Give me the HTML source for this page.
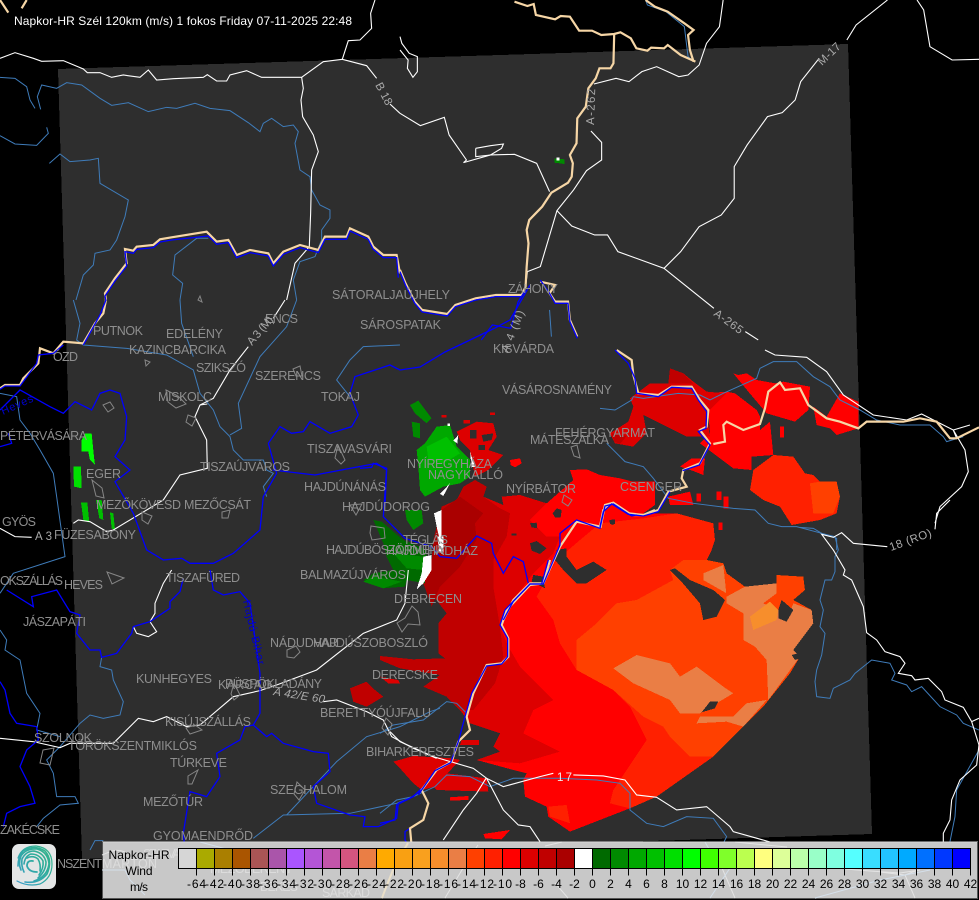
<!DOCTYPE html>
<html>
<head>
<meta charset="utf-8">
<style>
html,body{margin:0;padding:0;background:#000;width:979px;height:900px;overflow:hidden}
svg{display:block;position:absolute;left:0;top:0}
polyline,polygon,path{vector-effect:non-scaling-stroke}
.w polyline{fill:none;stroke:#fff;stroke-width:1.1}
.r polyline{fill:none;stroke:#3f7cba;stroke-width:1}
.b polyline{fill:none;stroke:#0000ff;stroke-width:1.3}
.p polyline{fill:none;stroke:#f6d6a6;stroke-width:2.2}
.o polygon,.o polyline{fill:none;stroke:#868686;stroke-width:1}
.x polygon,.x rect{shape-rendering:crispEdges}
text{font-family:"Liberation Sans",sans-serif}
.c text{fill:#8e8e8e;font-size:12.5px}
.l text{fill:#aaa;font-size:11.5px}
.u text{fill:#dcdcdc;font-size:12.5px}
.t text{fill:#000;font-size:12px;text-anchor:middle}
</style>
</head>
<body>
<svg width="979" height="900" viewBox="0 0 979 900" xmlns="http://www.w3.org/2000/svg">
<defs>
<linearGradient id="lg" gradientUnits="userSpaceOnUse" x1="14" y1="880" x2="52" y2="850">
<stop offset="0" stop-color="#3a9cc8"/><stop offset=".55" stop-color="#2eaaa0"/><stop offset="1" stop-color="#33b488"/>
</linearGradient>
</defs>
<rect width="979" height="900" fill="#000"/>
<polygon points="58,69 848,44 872,834 82,859" fill="#2e2e2e" shape-rendering="crispEdges"/>

<!-- radar main body -->
<g class="x">
<g transform="translate(380,560) scale(.3333)">
<polygon fill="#ff0000" points="130,70 155,0 160,-60 185,-160 230,-180 250,-220 285,-240 320,-220 310,-190 370,-165 365,-190 420,-195 500,-170 580,-240 570,-270 620,-272 660,-255 720,-245 760,-235 825,-235 825,-165 790,-140 890,-140 1000,-110 1005,-60 995,-30 980,0 1030,10 1040,40 1095,80 1190,70 1190,45 1270,50 1275,90 1240,120 1295,150 1300,190 1240,270 1260,290 1230,340 1150,440 1090,500 1000,590 830,710 750,745 570,815 505,770 500,740 435,710 430,660 440,640 400,630 290,600 360,575 340,560 360,520 270,490 240,450 200,410 130,380 180,345 60,325 0,300 0,288 100,298 195,295 175,280 175,190 200,160"/>
<polygon fill="#ff2000" points="530,0 600,-60 660,-110 790,-125 890,-140 1000,-110 1005,-60 995,-30 980,0 1030,10 1040,40 1095,80 1190,70 1190,45 1270,50 1275,90 1240,120 1295,150 1300,190 1240,270 1260,290 1230,340 1150,440 1090,500 1000,590 830,710 750,745 690,730 700,690 800,540 790,520 750,440 700,390 590,330 540,250 520,180 470,110"/>
<polygon fill="#ff4000" points="590,240 650,190 710,130 770,120 880,60 870,30 910,0 980,0 1030,10 1040,40 1095,80 1190,70 1190,45 1270,50 1275,90 1240,120 1295,150 1300,190 1240,270 1260,290 1230,340 1150,440 1090,500 1000,590 930,590 870,530 850,500 790,470 700,390 590,330"/>
<polygon fill="#ea7e45" points="700,325 770,285 870,310 900,350 950,320 1030,380 1060,400 1010,430 960,460 900,460 870,420 760,370"/>
<polygon fill="#ea7e45" points="1060,470 1100,430 1160,420 1090,500 1040,485 950,490 960,470"/>
<polygon fill="#ea7e45" points="970,40 1030,15 1040,110 1095,80 1190,70 1190,100 1150,130 1195,150 1220,185 1240,130 1295,150 1300,190 1240,270 1260,290 1165,420 1160,300 1125,260 1090,240 1090,160 1040,130 1040,100 970,60"/>
<polygon fill="#f78e2c" points="1110,170 1170,125 1195,150 1190,180 1120,210"/>
<polygon fill="#dd0000" points="130,70 155,0 160,-60 185,-160 230,-180 250,-220 285,-240 320,-220 310,-190 370,-165 365,-190 420,-195 500,-170 450,-120 500,-70 540,-70 520,-20 460,40 445,60 390,130 360,200 385,260 420,320 520,420 460,450 430,520 540,575 420,610 290,600 360,575 340,560 360,520 270,490 240,450 200,410 130,380 180,345 60,325 0,300 0,288 100,298 195,295 175,280 175,190 200,160"/>
<polygon fill="#c00000" points="130,70 155,0 160,-60 185,-160 230,-180 250,-220 285,-240 320,-220 310,-190 360,-155 390,-140 380,-70 340,0 340,80 360,200 370,290 345,370 280,450 240,450 200,410 130,380 180,345 60,325 0,300 0,288 100,298 195,295 175,280 175,190 200,160"/>
<polygon fill="#aa0000" points="130,70 155,0 160,-60 185,-150 240,-190 310,-140 285,-110 290,-60 240,20 180,80 155,140"/>
<polygon fill="#2e2e2e" points="965,457 990,425 1015,425 1005,445"/>
<polygon fill="#2e2e2e" points="870,30 885,25 930,60 1000,90 1035,120 1010,170 970,180 960,130 900,60"/>
<polygon fill="#2e2e2e" points="1195,150 1205,120 1240,150 1220,185 1195,175"/>
<polygon fill="#2e2e2e" points="1235,285 1255,280 1262,295 1245,300"/>
<polygon fill="#dd0000" points="40,605 100,588 215,595 240,600 165,680 125,690 100,670 60,625"/>
<polygon fill="#dd0000" points="160,680 200,640 320,655 325,695 170,690"/>
<polygon fill="#dd0000" points="245,540 297,540 297,555 240,555"/>
<polygon fill="#ff0000" points="210,712 265,708 265,720 210,722"/>
<polygon fill="#ff0000" points="310,822 390,810 365,838 315,835"/>
<polygon fill="#ff2000" points="505,740 560,735 570,790 510,770"/>
</g>
<g transform="translate(360,380) scale(.3333)">
<polygon fill="#2e2e2e" points="510,490 530,483 560,505 540,522 515,512"/>
<polygon fill="#2e2e2e" points="590,385 605,390 602,412 585,412 578,400"/>
<polygon fill="#2e2e2e" points="510,430 530,428 532,445 515,442"/>
<polygon fill="#2e2e2e" points="590,510 620,505 620,530 650,570 700,545 740,570 680,610 650,610 610,570 585,540"/>
<polygon fill="#2e2e2e" points="520,585 550,590 555,625 515,605"/>
<polygon fill="#2e2e2e" points="750,420 765,420 760,435 750,432"/>
<polygon fill="#2e2e2e" points="872,395 900,360 900,395 885,400"/>
<polygon fill="#2e2e2e" points="455,460 470,460 470,467 455,467"/>
<!-- speckled red -->
<polygon fill="#dd0000" points="290,155 350,125 400,130 410,170 385,210 430,225 385,270 345,290 330,210 300,180"/>
<polygon fill="#ff0000" points="450,240 480,235 485,250 465,262 452,255"/>
<polygon fill="#dd0000" points="245,105 260,105 260,112 245,112"/>
<polygon fill="#dd0000" points="390,97 405,97 405,105 390,105"/>
<polygon fill="#dd0000" points="310,120 330,120 330,130 310,130"/>
<polygon fill="#2e2e2e" points="330,150 350,150 350,175 330,175"/>
<polygon fill="#2e2e2e" points="365,165 400,160 395,180 370,185"/>
<polygon fill="#2e2e2e" points="355,195 375,195 375,210 355,210"/>
<!-- green -->
<polygon fill="#008a00" points="150,75 175,62 215,115 200,130 165,100"/>
<polygon fill="#008a00" points="155,125 180,130 180,175 160,170"/>
<polygon fill="#00a800" points="195,190 230,140 270,135 290,200 330,240 330,290 300,310 250,320 195,350 180,330 175,260 170,210"/>
<polygon fill="#00c000" points="200,200 260,170 300,220 250,250 205,240"/>
<polygon fill="#008a00" points="135,390 185,390 190,430 160,450 140,420"/>
<polygon fill="#006a00" points="40,420 65,425 130,480 200,510 195,610 140,600 135,620 70,625 10,600 40,580 100,570 80,530 70,490"/>
<polygon fill="#008a00" points="100,520 190,530 190,570 140,565"/>
<!-- white -->
<polygon fill="#fff" points="222,400 245,390 245,500 232,450"/>
<polygon fill="#fff" points="232,470 250,470 250,525 238,515"/>
<polygon fill="#fff" points="190,530 215,525 215,570 190,610 170,628 185,580"/>
<polygon fill="#fff" points="240,342 270,310 250,348"/>
<polygon fill="#fff" points="280,182 295,165 292,190"/>
<polygon fill="#fff" points="330,215 345,260 335,262"/>
<polygon fill="#fff" points="262,130 270,130 270,138 262,138"/>
</g>
<!-- NE -->
<g transform="translate(600,350) scale(.3333)">
<polygon fill="#ff0000" points="320,130 380,125 405,130 470,180 480,200 480,240 510,215 520,315 455,320 455,360 400,355 340,310 300,280 330,250"/>
<polygon fill="#ff0000" points="400,70 415,75 440,70 470,90 525,100 550,95 630,110 625,180 585,215 500,190 445,125"/>
<polygon fill="#ff0000" points="640,170 680,200 720,130 775,155 775,235 710,255 690,235 650,225"/>
<polygon fill="#dd0000" points="90,145 150,100 205,100 210,55 250,70 280,95 320,125 380,130 320,190 330,260 260,260 200,230 130,195 140,250 100,290 45,280 30,250 85,215 100,170"/>
<polygon fill="#c00000" points="210,55 250,70 280,100 205,100"/>
<polygon fill="#c00000" points="35,250 80,258 60,282 42,275"/>
<polygon fill="#ff2000" points="460,360 520,315 580,320 615,370 640,375 660,395 710,395 720,440 710,490 660,510 575,525 540,470 490,450 450,420"/>
<polygon fill="#ff4000" points="630,400 660,395 710,395 720,440 700,490 640,490"/>
<polygon fill="#ff0000" points="540,230 552,230 552,262 540,262"/>
<polygon fill="#ff0000" points="275,325 315,325 310,375 285,365 240,350"/>
<polygon fill="#ff0000" points="205,440 270,425 280,465 210,465"/>
<polygon fill="#ff0000" points="350,425 365,425 365,450 350,450"/>
<polygon fill="#ff0000" points="370,440 385,440 385,475 370,475"/>
<polygon fill="#ff0000" points="290,430 303,430 303,455 290,455"/>
<polygon fill="#ff0000" points="355,518 368,518 368,540 355,540"/>
<polygon fill="#2e2e2e" points="28,510 45,508 45,522 30,522"/>
</g>
<!-- west green, small -->
<g transform="translate(0,300) scale(.3333)">
<polygon fill="#00ff00" points="255,400 275,400 282,470 285,495 270,480 265,455 245,455 245,420"/>
<polygon fill="#00e000" points="220,500 243,500 245,565 222,560"/>
<polygon fill="#00c000" points="243,607 262,607 268,668 250,660"/>
<polygon fill="#00c000" points="288,600 305,600 310,660 298,655"/>
<polygon fill="#00c000" points="330,637 340,640 345,690 335,685"/>
</g>
<g transform="translate(400,0) scale(.3693,.3333)">
<polygon fill="#008a00" points="418,475 445,478 445,492 418,488"/>
<polygon fill="#fff" points="424,472 432,472 432,482 424,482"/>
</g>
<g transform="translate(0,570) scale(.3333)">
<polygon fill="#c00000" points="1050,355 1100,335 1125,360 1150,380 1100,410 1060,395"/>
<polygon fill="#dd0000" points="1140,320 1195,330 1200,340 1165,340"/>
<polygon fill="#008a00" points="1090,35 1120,20 1180,30 1205,35 1150,55"/>
</g>
</g>

<!-- light rivers -->
<g class="r">
<g transform="scale(.3333)">
<polyline points="0,232 45,235 80,260 90,300 105,325"/>
<polyline points="122,328 112,290 125,255 170,265 200,248 245,255 300,295 335,316 385,308 445,335 500,322 530,325 585,310 630,325 690,332 745,368 780,395 790,370 815,355 850,380 880,375 895,395 885,430 900,510 930,530 935,570 960,615 990,630 990,655 965,690 965,720 945,770 900,785 880,840 890,900"/>
<polyline points="0,407 45,432 110,436 145,400 140,382"/>
<polyline points="148,490 180,462 210,485 270,480 295,475 300,550 385,600 375,650 350,720 330,750 285,760 280,795 250,825 228,900"/>
<polyline points="625,715 590,715 525,765 518,825 548,850 540,900"/>
</g>
<g transform="translate(0,300) scale(.3333)">
<polyline points="220,0 240,70 230,120 250,135 380,145 500,165 580,210 600,280 640,330 660,380 690,410 700,450 730,480 790,480 800,510 820,520 790,560 800,590"/>
<polyline points="890,0 860,80 780,170 715,310 725,385 690,405"/>
<polyline points="540,0 545,70 580,170"/>
<polyline points="1200,135 1090,140 1050,180 1010,240 1050,290"/>
<polyline points="0,280 50,290 60,360 90,400 120,450 160,520 170,590 195,770 40,820 0,880"/>
</g>
<g transform="translate(0,570) scale(.3333)">
<polyline points="0,180 20,210 15,240 60,270 80,370 120,430 110,480 180,500"/>
<polyline points="305,262 300,290 335,300 340,330 370,395 360,435 310,445 270,435 240,460 180,530 140,570 160,610 170,680 225,680 235,700 180,705 130,745 110,770"/>
<polyline points="270,840 285,812 310,812"/>
<polyline points="760,805 850,735 1050,730 1190,700 1240,680"/>
<polyline points="860,735 1010,575 1100,500 1200,470 1290,425 1320,415"/>
</g>
<g transform="translate(380,560) scale(.3333)">
<polyline points="0,520 40,495 130,480 200,425 230,430 260,460"/>
<polyline points="0,760 50,720 100,710 165,680 200,645 270,650 330,680 400,655 540,655 650,660 720,670 750,700 750,750 800,790 850,800 920,770 1000,775 1040,830 1030,850"/>
</g>
<g transform="translate(600,350) scale(.3333)">
<polyline points="0,175 45,180 95,150 100,140 130,145 235,130 300,135 330,150 370,130 470,85 480,55 520,35 590,35 640,80 690,110 720,150 780,180 830,210 900,225 990,225 1030,260 1040,275 1090,260"/>
<polyline points="20,280 75,335 130,350 160,385 205,445 280,460 400,475 465,480 505,520 545,530 590,530 665,550 710,565 710,600"/>
</g>
<g transform="translate(400,0) scale(.3693,.3333)">
<polyline points="405,930 410,1010"/>
<polyline points="665,0 670,15 720,35 770,80 780,170 795,185"/>
</g>
<g transform="translate(800,500) scale(.3333)">
<polyline points="0,82 40,85 65,100 105,110 115,150 105,170 105,215 95,240 75,240 60,300 70,330 60,380 75,400 65,465 50,510 45,545 50,590 90,595 100,565 150,540 165,520 215,480 270,490 285,520 275,540 320,555 335,575 365,560 420,620 470,645 490,670 525,685 537,690"/>
<polyline points="537,750 470,870 465,950 450,1025"/>
</g>
</g>

<!-- white roads -->
<g class="w">
<g transform="scale(.3333)">
<polyline points="0,175 45,158 100,175 125,184 190,182 250,207 262,218 300,218 335,232 370,225 420,232 445,210 470,240 520,236 610,232 622,224 650,243 680,243 690,225 740,212 785,232 905,232 970,185 1027,178 1100,197 1130,235"/>
<polyline points="1027,178 1045,122 1080,120 1115,85 1112,40 1125,0"/>
<polyline points="905,232 910,265 903,300 908,350 940,405 955,455 935,510 932,640 928,740 885,790 860,900"/>
<polyline points="1200,340 1170,312"/>
</g>
<g transform="translate(0,300) scale(.3333)">
<polyline points="855,0 820,55"/>
<polyline points="745,140 690,210 640,295 600,315 585,350 620,420 622,505 540,525 490,600 340,690 320,695 270,665 235,660 220,670"/>
<polyline points="600,315 622,312"/>
<polyline points="0,685 45,710 95,712"/>
</g>
<g transform="translate(0,570) scale(.3333)">
<polyline points="0,505 100,515 180,533 210,520 340,520 415,445 460,455 500,440 560,470 600,465 700,380 780,362 830,345 950,300 1090,190 1190,150 1215,100 1225,0"/>
<polyline points="970,395 1010,390 1100,425 1150,450 1175,500 1240,535 1310,565"/>
<polyline points="515,0 490,40 465,100 465,130 450,155 470,185 445,200 410,190 400,170"/>
</g>
<g transform="translate(380,560) scale(.3333)">
<polyline points="30,515 60,545 160,590 280,625 320,655 370,680 480,650 520,640"/>
<polyline points="580,645 670,648 735,660 770,705 830,712 890,750 980,740 1050,800 1060,815 1220,860"/>
<polyline points="318,655 290,700 250,750 190,840"/>
<polyline points="320,655 370,750 415,795 450,800 490,860"/>
</g>
<g transform="translate(600,350) scale(.3333)">
<polyline points="495,0 525,15 620,22 680,65 730,135 820,195 920,210 965,192 1010,215 1060,240 1095,300 1105,365 1085,410 1020,470 1005,520"/>
<polyline points="1060,240 1110,225"/>
<polyline points="1060,240 1070,265"/>
</g>
<g transform="translate(800,500) scale(.3333)">
<polyline points="405,88 410,40 450,0"/>
<polyline points="262,140 160,130 125,98 100,112 65,103 100,150 135,210 130,225 155,240 190,320 200,398 230,420 255,455 300,470 315,490 295,520 335,527 345,540 385,535 425,575 435,600 490,622 515,665 537,735 530,795 480,840 455,900 450,960 430,1000 430,1040"/>
<polyline points="515,665 537,655"/>
</g>
<g transform="translate(400,0) scale(.3693,.3333)">
<polyline points="0,340 55,377 120,352 133,405 180,480 172,488 245,465 310,463 370,490 405,575"/>
<polyline points="205,445 245,437 280,432 275,445 245,465 205,470 205,445"/>
<polyline points="0,110 5,130 25,160 47,170 47,215 35,232 20,205 22,180 0,150"/>
<polyline points="875,0 865,80 830,130 810,195 780,225 755,230 695,200 655,215 620,245 585,235 525,252"/>
<polyline points="517,393 546,427 546,480 505,512 470,570 425,632 380,800 345,815 340,860"/>
<polyline points="425,632 465,678 527,705 562,705 590,755 715,805 760,845 850,925"/>
<polyline points="935,995 970,1020"/>
<polyline points="715,805 760,755 810,680 870,645 905,595 905,500 940,435 995,350 1035,338 1070,300 1085,245 1135,175"/>
<polyline points="1210,120 1235,75 1320,0"/>
<polyline points="1400,0 1418,30 1435,140 1495,180 1568,178"/>
</g>
</g>

<!-- blue internal borders -->
<g class="b">
<polyline points="400,370 420,367 445,352 470,340 495,328 510,320 530,285"/>
<g transform="translate(360,380) scale(.3333)">
<polyline points="0,265 35,262 40,250 80,265 70,410 135,475 215,500 240,530 290,535 350,468 395,490 400,520 430,580 460,530 490,545 505,610"/>
</g>
<g transform="translate(0,300) scale(.3333)">
<polyline points="805,430 840,380 875,400 910,395 930,365 990,400 1055,380 1075,345 1050,280 1065,230 1170,195 1200,210"/>
<polyline points="818,510 945,525 1130,490 1160,510 1155,620"/>
<polyline points="330,270 360,280 380,350 375,420 345,470 390,510 345,545 400,640 440,750 490,780 545,775 570,790 640,790 700,760 780,690 790,590 830,520 805,430"/>
<polyline points="0,330 60,270 150,320 190,340 225,305 275,330 300,280 330,270"/>
<polyline points="0,440 35,430 25,400"/>
</g>
<g transform="translate(0,570) scale(.3333)">
<polyline points="630,0 640,60 670,75 720,65 750,100 780,310 780,430 760,465 735,470 720,510 650,550 660,620 620,680 570,665 550,790 555,840"/>
<polyline points="760,465 800,500 815,490 850,520 940,545 985,550 990,605 940,650 950,700 1050,735 1095,740 1090,770 1135,770 1190,745 1195,700 1240,680 1265,655"/>
<polyline points="20,60 100,110 95,80 170,60 210,125 240,135 230,190 270,240 300,240 305,262 350,250 395,190 400,170 450,155 510,115 510,95 540,65 550,25"/>
<polyline points="0,335 15,360 30,430 50,460 110,470 115,510 80,540 60,590 90,650 105,700 60,710 20,730 10,770"/>
</g>
<g transform="translate(380,560) scale(.3333)">
<polyline points="125,690 90,715 50,735 45,780 0,790"/>
<polyline points="90,805 75,815 75,840 90,860"/>
</g>
</g>

<!-- peach border -->
<g class="p">
<g transform="translate(400,0) scale(.3693,.3333)">
<polyline points="310,5 345,18 362,12 368,45 420,58 435,48 460,50 485,92 520,92 545,105 580,102 597,97 625,115 640,145 670,152 680,143 715,145 725,135 760,165 800,185"/>
<polyline points="580,102 578,190 570,205 540,205 530,235 510,265 503,320 480,355 478,430 460,465 468,490 465,530 455,548 410,578 385,620 350,660 343,690 348,730 343,800 340,860 330,885"/>
<polyline points="330,885 260,885 205,895 150,915 128,942 60,930 40,905 15,850 0,810"/>
<polyline points="380,845 420,855 405,880 420,905 455,905 460,960 480,1010"/>
<polyline points="665,0 690,20 725,35 770,70 795,90 780,105 785,150 795,185"/>
</g>
<g transform="scale(.3333)">
<polyline points="0,0 25,38"/><polyline points="65,25 80,0"/>
<polyline points="1200,820 1190,765 1150,765 1120,740 1105,710 1050,685 1040,710 975,710 955,750 900,735 850,755 820,790 805,760 750,750 710,765 685,720 650,725 625,700 620,695 515,712 480,718 460,735 410,740 400,752 375,747 380,790 345,835 315,880 318,900"/>
</g>
<g transform="translate(0,300) scale(.3333)">
<polyline points="318,0 310,40 285,70 250,130 190,125 160,160 120,145 115,190 70,235 60,255 15,255 0,265"/>
</g>
<g transform="translate(600,350) scale(.3333)">
<polyline points="50,0 95,30 100,75 115,130 175,135 215,110 275,110 300,150 325,180 320,230 300,240 330,280 300,340 250,360 245,385 260,410 205,425 175,480 130,495 85,490 35,460 10,480 0,530"/>
<polyline points="340,282 375,275 370,225 380,215 430,240 480,222 495,175 505,125 540,97 555,120 600,115 625,165 680,205 720,215 775,235 800,215 910,215 960,205 1010,215 1050,265 1070,265 1137,232"/>
</g>
<g transform="translate(360,380) scale(.3333)">
<polyline points="885,390 850,405 815,405 760,368 735,375 722,440 650,425 600,500 550,610 510,610 460,660 430,720"/>
</g>
<g transform="translate(380,560) scale(.3333)">
<polyline points="510,0 490,70 450,75 380,150 365,195 385,235 385,290 365,310 320,315 280,400 260,470 270,510 235,545 215,605 170,630 125,690 145,730 130,780 90,805 95,860"/>
</g>
</g>

<!-- blue over border -->
<g class="b">
<g transform="translate(0,1) scale(.3333)">
<polyline points="1195,830 1190,770 1150,770 1120,745 1105,715 1050,690 1040,715 975,715 955,755 900,740 850,760 820,795 805,765 750,755 710,770 685,725 650,730 625,705 515,717 480,723 460,740 410,745 400,757 375,752 380,795 345,840 315,885 318,900"/>
</g>
<g transform="translate(400,0) scale(.3693,.3333)">
<polyline points="330,890 260,890 205,900 150,920 128,948 60,936 40,910 15,856 0,815"/>
<polyline points="380,840 405,880 420,910 455,910 460,965 480,1015"/>
<polyline points="340,870 320,905 300,985 250,975 220,1020"/>
</g>
<g transform="translate(600,350) scale(.3333)">
<polyline points="45,0 85,40 105,85 110,130 175,140 215,112 275,115 295,150 320,185 318,235 295,245 330,285 298,345 248,362"/>
<polyline points="210,425 175,485 130,498 85,493 35,462 10,485 0,530"/>
</g>
<g transform="translate(360,380) scale(.3333)">
<polyline points="830,405 815,408 760,372 735,378 720,445 650,420 600,460 600,495 550,612 510,612 460,664 430,720"/>
</g>
<g transform="translate(380,560) scale(.3333)">
<polyline points="505,0 485,72 450,72 375,150 360,195 383,235 383,290 365,312 320,318 275,400 255,470 235,545 212,608 165,632 125,690 115,705"/>
</g>
<g transform="translate(0,300) scale(.3333)">
<polyline points="318,0 300,45 250,135"/>
<polyline points="190,135 160,160 115,165 110,190 60,258 15,258 0,268"/>
</g>
</g>

<!-- city outlines -->
<g class="o">
<polygon points="371,526 384,528 385,538 372,540 370,533"/>
<polygon points="397,623 405,618 412,606 418,612 420,625 408,624 402,632"/>
<polygon points="287,650 296,646 300,652 294,658 287,657"/>
<polygon points="166,390 178,396 186,404 176,408 168,402"/>
<polygon points="188,415 196,418 192,426 186,422"/>
<polygon points="103,405 108,412 114,408 110,402"/>
<polygon points="571,447 577,445 580,458 574,456"/>
<polygon points="564,495 572,500 568,506 562,502"/>
<polygon points="92,480 102,488 104,498 96,496"/>
<polygon points="142,512 152,516 148,524 142,520"/>
<polygon points="222,512 230,510 228,518 222,518"/>
<polygon points="293,369 300,366 302,376 296,376"/>
<polygon points="338,445 345,460 341,464 335,458"/>
<polygon points="350,505 362,504 356,515"/>
<polygon points="188,776 198,770 192,784 188,784"/>
<polygon points="297,782 305,790 299,800 294,794"/>
<polygon points="43,750 54,748 50,765 40,763"/>
<polygon points="195,725 202,730 190,734 186,728"/>
<polygon points="234,683 240,695 234,700 231,694"/>
<polygon points="190,862 206,862 200,868"/>
<polygon points="107,572 124,578 112,584"/>
<polygon points="386,718 392,724 388,735 382,728"/>
<polygon points="198,300 200,296 202,302"/>
<polygon points="145,360 150,362 146,366"/>
</g>

<!-- city labels -->
<g class="c">
<text x="332" y="299" textLength="118">SÁTORALJAÚJHELY</text>
<text x="508" y="293" textLength="50">ZÁHONY</text>
<text x="360" y="329" textLength="81">SÁROSPATAK</text>
<text x="493" y="353" textLength="61">KISVÁRDA</text>
<text x="502" y="394" textLength="110">VÁSÁROSNAMÉNY</text>
<text x="555" y="437" textLength="100">FEHÉRGYARMAT</text>
<text x="530" y="444" textLength="79">MÁTÉSZALKA</text>
<text x="506" y="493" textLength="70">NYÍRBÁTOR</text>
<text x="620" y="491" textLength="62">CSENGER</text>
<text x="407" y="468" textLength="85">NYÍREGYHÁZA</text>
<text x="428" y="479" textLength="75">NAGYKÁLLÓ</text>
<text x="304" y="491" textLength="82">HAJDÚNÁNÁS</text>
<text x="342" y="511" textLength="88">HAJDÚDOROG</text>
<text x="326" y="554" textLength="120">HAJDÚBÖSZÖRMÉNY</text>
<text x="403" y="544" textLength="45">TÉGLÁS</text>
<text x="386" y="555" textLength="92">HAJDÚHADHÁZ</text>
<text x="300" y="579" textLength="106">BALMAZÚJVÁROS</text>
<text x="394" y="603" textLength="68">DEBRECEN</text>
<text x="307" y="453" textLength="85">TISZAVASVÁRI</text>
<text x="200" y="471" textLength="90">TISZAÚJVÁROS</text>
<text x="96" y="509" textLength="85">MEZŐKÖVESD</text>
<text x="184" y="509" textLength="67">MEZŐCSÁT</text>
<text x="54" y="539" textLength="82">FÜZESABONY</text>
<text x="86" y="478" textLength="35">EGER</text>
<text x="0" y="440" textLength="87">PÉTERVÁSÁRA</text>
<text x="2" y="526" textLength="34">GYÖS</text>
<text x="0" y="585" textLength="63">OKSZÁLLÁS</text>
<text x="64" y="589" textLength="39">HEVES</text>
<text x="23" y="626" textLength="63">JÁSZAPÁTI</text>
<text x="166" y="582" textLength="74">TISZAFÜRED</text>
<text x="93" y="335" textLength="50">PUTNOK</text>
<text x="166" y="338" textLength="57">EDELÉNY</text>
<text x="129" y="354" textLength="97">KAZINCBARCIKA</text>
<text x="196" y="372" textLength="50">SZIKSZÓ</text>
<text x="255" y="380" textLength="66">SZERENCS</text>
<text x="265" y="323" textLength="33">ENCS</text>
<text x="321" y="401" textLength="39">TOKAJ</text>
<text x="158" y="401" textLength="54">MISKOLC</text>
<text x="53" y="361" textLength="25">ÓZD</text>
<text x="270" y="647" textLength="68">NÁDUDVAR</text>
<text x="313" y="647" textLength="115">HAJDÚSZOBOSZLÓ</text>
<text x="136" y="683" textLength="76">KUNHEGYES</text>
<text x="218" y="689" textLength="54">KARCAG</text>
<text x="225" y="688" textLength="97">PÜSPÖKLADÁNY</text>
<text x="320" y="717" textLength="111">BERETTYÓÚJFALU</text>
<text x="372" y="679" textLength="66">DERECSKE</text>
<text x="366" y="756" textLength="108">BIHARKERESZTES</text>
<text x="165" y="726" textLength="86">KISÚJSZÁLLÁS</text>
<text x="34" y="742" textLength="58">SZOLNOK</text>
<text x="68" y="750" textLength="129">TÖRÖKSZENTMIKLÓS</text>
<text x="170" y="767" textLength="57">TÚRKEVE</text>
<text x="270" y="794" textLength="77">SZEGHALOM</text>
<text x="143" y="806" textLength="60">MEZŐTÚR</text>
<text x="153" y="840" textLength="100">GYOMAENDRŐD</text>
<text x="0" y="834" textLength="60">ZAKÉCSKE</text>
<text x="57" y="868" textLength="45">NSZENT</text>
</g>

<!-- road labels -->
<g class="l">
<text transform="translate(375,85) rotate(62)" textLength="24">B 18</text>
<text transform="translate(594,125) rotate(-88)" textLength="36">A-262</text>
<text transform="translate(822,66) rotate(-44)" textLength="27">M-17</text>
<text transform="translate(713,315) rotate(36)" textLength="33">A-265</text>
<text transform="translate(891,551) rotate(-20)" textLength="44">18 (RO)</text>
<text x="557" y="781" textLength="15" style="fill:#eee">17</text>
<text transform="translate(252,346) rotate(-50)" textLength="34">A 3 (M)</text>
<text transform="translate(508,353) rotate(-68)" textLength="44">A 4 (M)</text>
<text transform="translate(273,695) rotate(9)" textLength="52" font-style="italic">A 42/E 60</text>
<text x="35" y="540" textLength="17">A 3</text>
</g>
<text transform="translate(243,601) rotate(77)" textLength="66" style="fill:#0000c8;font-size:11px">Hajdú-Bihar</text>
<text transform="translate(3,415) rotate(-24)" textLength="34" style="fill:#0000c8;font-size:11px">Heves</text>

<!-- title -->
<text x="14" y="25" textLength="338" style="fill:#fff;font-size:12px">Napkor-HR Szél 120km (m/s) 1 fokos Friday 07-11-2025 22:48</text>

<!-- logo -->
<rect x="12" y="844" width="44" height="45" rx="7" fill="#e4e6e6"/>
<g fill="none" stroke="url(#lg)" stroke-linecap="round">
<path d="M17 881 Q28 887 40 884 Q52 878 52 864 Q52 848 36 846 Q22 846 18 858" stroke-width="1.2"/>
<path d="M25 882 Q39 884 47 874 Q53 860 45 851 Q34 844 23 851 Q18 857 18 866" stroke-width="1.6"/>
<path d="M34 881 Q47 877 49 864 Q48 852 37 849 Q26 848 21 856 Q18 864 21 870" stroke-width="1.6"/>
<path d="M38 878 Q46 871 46 862 Q44 853 34 851 Q26 851 22 859 Q21 866 24 872" stroke-width="1.6"/>
<path d="M39 875 Q44 868 43 861 Q39 854 31 854 Q25 856 24 864" stroke-width="1.6"/>
<path d="M40 871 Q41 864 38 859 Q33 855 27 858" stroke-width="1.6"/>
<path d="M33 861 Q27 860 27 866 Q29 872 37 872" stroke-width="1.8"/>
</g>

<!-- legend panel -->
<rect x="102" y="842" width="876" height="56" fill="#c8c8c8"/>
<path d="M102 842H978" stroke="#d6d6d6" fill="none"/>
<path d="M102 898.5H978M977.5 842V898M102.5 842V898" stroke="#555" stroke-width="1" fill="none"/>
<g fill="none" stroke="#e4e4e4" stroke-width="1">
<path d="M102 855C110 852 115 848 125 852"/>
<path d="M735 842L787 847"/>
<path d="M845 869L870 871L900 873L920 870"/>
<path d="M880 872L905 875L918 870"/>
<path d="M905 875L915 898"/>
<path d="M555 883L568 898"/>
<path d="M722 868L735 898"/>
<path d="M408 843L395 865L385 890L382 898" stroke="#eadfc8" stroke-width="2"/>
<path d="M445 898L468 860L478 845"/>
<path d="M562 842L545 846"/>
<path d="M705 842L720 868" stroke="#d4dfea"/>
<path d="M710 898L730 868" stroke="#d4dfea"/>
<path d="M102 870H125L130 880L145 895" stroke="#d4dfea"/>
<path d="M200 842L260 858" stroke="#d4dfea"/>
<path d="M815 898L880 880L930 870" stroke="#d4dfea"/>
</g>
<g class="u">
<text x="102" y="868" textLength="55">MÁRTON</text>
<text x="143" y="858" textLength="44">SZARVAS</text>
<text x="210" y="873" textLength="83">MEZŐBERÉNY</text>
<text x="260" y="891" textLength="38">BÉKÉS</text>
<text x="322" y="897" textLength="48">SARKAD</text>
</g>
<g class="t">
<text x="139" y="859" textLength="61">Napkor-HR</text>
<text x="139" y="875" textLength="27">Wind</text>
<text x="139" y="891" textLength="18">m/s</text>
</g>

<g stroke="#000" stroke-width="1" shape-rendering="crispEdges">
<rect x="178.5" y="848.5" width="18" height="20" fill="#d6d6d6"/>
<rect x="196.5" y="848.5" width="18" height="20" fill="#aaaa00"/>
<rect x="214.5" y="848.5" width="18" height="20" fill="#aa7f00"/>
<rect x="232.5" y="848.5" width="18" height="20" fill="#aa5500"/>
<rect x="250.5" y="848.5" width="18" height="20" fill="#aa5555"/>
<rect x="268.5" y="848.5" width="18" height="20" fill="#aa55aa"/>
<rect x="286.5" y="848.5" width="18" height="20" fill="#aa55ff"/>
<rect x="304.5" y="848.5" width="18" height="20" fill="#b455d6"/>
<rect x="322.5" y="848.5" width="18" height="20" fill="#c355aa"/>
<rect x="340.5" y="848.5" width="18" height="20" fill="#d4557f"/>
<rect x="358.5" y="848.5" width="18" height="20" fill="#ea7e45"/>
<rect x="376.5" y="848.5" width="18" height="20" fill="#ffaa00"/>
<rect x="394.5" y="848.5" width="18" height="20" fill="#f9a012"/>
<rect x="412.5" y="848.5" width="18" height="20" fill="#f9a01e"/>
<rect x="430.5" y="848.5" width="18" height="20" fill="#f78e2c"/>
<rect x="448.5" y="848.5" width="18" height="20" fill="#ea7e45"/>
<rect x="466.5" y="848.5" width="18" height="20" fill="#ff4000"/>
<rect x="484.5" y="848.5" width="18" height="20" fill="#ff2000"/>
<rect x="502.5" y="848.5" width="18" height="20" fill="#ff0000"/>
<rect x="520.5" y="848.5" width="18" height="20" fill="#dd0000"/>
<rect x="538.5" y="848.5" width="18" height="20" fill="#c00000"/>
<rect x="556.5" y="848.5" width="18" height="20" fill="#aa0000"/>
<rect x="574.5" y="848.5" width="18" height="20" fill="#ffffff"/>
<rect x="592.5" y="848.5" width="18" height="20" fill="#006a00"/>
<rect x="610.5" y="848.5" width="18" height="20" fill="#008a00"/>
<rect x="628.5" y="848.5" width="18" height="20" fill="#00a800"/>
<rect x="646.5" y="848.5" width="18" height="20" fill="#00c000"/>
<rect x="664.5" y="848.5" width="18" height="20" fill="#00df00"/>
<rect x="682.5" y="848.5" width="18" height="20" fill="#00ff00"/>
<rect x="700.5" y="848.5" width="18" height="20" fill="#3fff00"/>
<rect x="718.5" y="848.5" width="18" height="20" fill="#7fff2a"/>
<rect x="736.5" y="848.5" width="18" height="20" fill="#bbff4f"/>
<rect x="754.5" y="848.5" width="18" height="20" fill="#ffff7f"/>
<rect x="772.5" y="848.5" width="18" height="20" fill="#ddff99"/>
<rect x="790.5" y="848.5" width="18" height="20" fill="#bbffaa"/>
<rect x="808.5" y="848.5" width="18" height="20" fill="#99ffc8"/>
<rect x="826.5" y="848.5" width="18" height="20" fill="#7fffe0"/>
<rect x="844.5" y="848.5" width="18" height="20" fill="#55ffff"/>
<rect x="862.5" y="848.5" width="18" height="20" fill="#39ddff"/>
<rect x="880.5" y="848.5" width="18" height="20" fill="#22c4ff"/>
<rect x="898.5" y="848.5" width="18" height="20" fill="#00aaff"/>
<rect x="916.5" y="848.5" width="18" height="20" fill="#0070ff"/>
<rect x="934.5" y="848.5" width="18" height="20" fill="#0038ff"/>
<rect x="952.5" y="848.5" width="18" height="20" fill="#0000ff"/>
</g>
<line x1="196" y1="872" x2="971" y2="872" stroke="#000" stroke-width="7" stroke-dasharray="1 17" shape-rendering="crispEdges"/>
<g class="t">
<text x="196.5" y="888" textLength="19">-64</text><text x="214.5" y="888" textLength="19">-42</text><text x="232.5" y="888" textLength="19">-40</text><text x="250.5" y="888" textLength="19">-38</text><text x="268.5" y="888" textLength="19">-36</text><text x="286.5" y="888" textLength="19">-34</text><text x="304.5" y="888" textLength="19">-32</text><text x="322.5" y="888" textLength="19">-30</text><text x="340.5" y="888" textLength="19">-28</text><text x="358.5" y="888" textLength="19">-26</text><text x="376.5" y="888" textLength="19">-24</text><text x="394.5" y="888" textLength="19">-22</text><text x="412.5" y="888" textLength="19">-20</text><text x="430.5" y="888" textLength="19">-18</text><text x="448.5" y="888" textLength="19">-16</text><text x="466.5" y="888" textLength="19">-14</text><text x="484.5" y="888" textLength="19">-12</text><text x="502.5" y="888" textLength="19">-10</text><text x="520.5" y="888">-8</text><text x="538.5" y="888">-6</text><text x="556.5" y="888">-4</text><text x="574.5" y="888">-2</text><text x="592.5" y="888">0</text><text x="610.5" y="888">2</text><text x="628.5" y="888">4</text><text x="646.5" y="888">6</text><text x="664.5" y="888">8</text><text x="682.5" y="888">10</text><text x="700.5" y="888">12</text><text x="718.5" y="888">14</text><text x="736.5" y="888">16</text><text x="754.5" y="888">18</text><text x="772.5" y="888">20</text><text x="790.5" y="888">22</text><text x="808.5" y="888">24</text><text x="826.5" y="888">26</text><text x="844.5" y="888">28</text><text x="862.5" y="888">30</text><text x="880.5" y="888">32</text><text x="898.5" y="888">34</text><text x="916.5" y="888">36</text><text x="934.5" y="888">38</text><text x="952.5" y="888">40</text><text x="970.5" y="888">42</text>
</g>
</svg>
</body>
</html>
